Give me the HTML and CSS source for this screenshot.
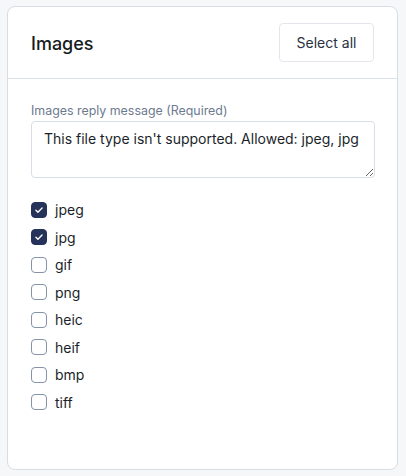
FILE: index.html
```html
<!DOCTYPE html>
<html>
<head>
<meta charset="utf-8">
<link rel="stylesheet" href="styles.css">
</head>
<body>
<div class="card">
  <div class="card-header">
    <h2 class="title">Images</h2>
    <button class="btn">Select all</button>
  </div>
  <div class="card-body">
    <label class="field-label">Images reply message (Required)</label>
    <textarea class="textarea">This file type isn't supported. Allowed: jpeg, jpg</textarea>
    <ul class="checks">
      <li class="check"><span class="box checked"><svg viewBox="0 0 16 16" width="16" height="16"><path d="M4.5 8.2l2.3 2.3 4.7-4.8" fill="none" stroke="#fff" stroke-width="1.6" stroke-linecap="round" stroke-linejoin="round"/></svg></span><span class="check-label">jpeg</span></li>
      <li class="check"><span class="box checked"><svg viewBox="0 0 16 16" width="16" height="16"><path d="M4.5 8.2l2.3 2.3 4.7-4.8" fill="none" stroke="#fff" stroke-width="1.6" stroke-linecap="round" stroke-linejoin="round"/></svg></span><span class="check-label">jpg</span></li>
      <li class="check"><span class="box"></span><span class="check-label">gif</span></li>
      <li class="check"><span class="box"></span><span class="check-label">png</span></li>
      <li class="check"><span class="box"></span><span class="check-label">heic</span></li>
      <li class="check"><span class="box"></span><span class="check-label">heif</span></li>
      <li class="check"><span class="box"></span><span class="check-label">bmp</span></li>
      <li class="check"><span class="box"></span><span class="check-label">tiff</span></li>
    </ul>
  </div>
</div>
</body>
</html>
```
FILE: styles.css
```css
* { box-sizing: border-box; }
html, body { margin: 0; padding: 0; }
body {
  background: #f6f7f9;
  font-family: Inter, "Noto Sans", sans-serif;
  color: #1b1f2a;
  padding: 6px 8px 6px 7px;
}
.card {
  background: #fff;
  border: 1px solid #d7dde5;
  border-radius: 8px;
  height: 464px;
  display: flex;
  flex-direction: column;
}
.card-header {
  display: flex;
  align-items: center;
  justify-content: space-between;
  padding: 0 23px 0 23px;
  height: 72px;
  border-bottom: 1px solid #dde2e9;
}
.title {
  margin: 0;
  font-size: 18px;
  font-weight: 500;
  color: #161a22;
  padding-top: 2px;
}
.btn {
  font-family: inherit;
  font-size: 14px;
  color: #2a3142;
  background: #fff;
  border: 1px solid #e3e7ed;
  border-radius: 4px;
  width: 95px;
  height: 39px;
  padding: 0;
}
.card-body {
  padding: 24px 23px 0 23px;
}
.field-label {
  display: block;
  font-size: 12.4px;
  color: #6c7a8f;
  line-height: 16px;
}
.textarea {
  display: block;
  margin-top: 2px;
  width: 344px;
  height: 57px;
  border: 1px solid #d9dee6;
  border-radius: 4px;
  font-family: inherit;
  font-size: 14px;
  line-height: 20px;
  color: #1b1f2a;
  padding: 7px 12px;
  resize: vertical;
}
.checks {
  list-style: none;
  margin: 18px 0 0 0;
  padding: 0;
}
.check {
  display: flex;
  align-items: center;
  height: 27.5px;
  gap: 8px;
}
.box {
  width: 16px;
  height: 16px;
  border: 1.5px solid #8493a8;
  border-radius: 4px;
  display: flex;
  align-items: center;
  justify-content: center;
  flex: none;
}
.box.checked {
  background: #25325a;
  border-color: #25325a;
}
.box svg { display: block; }
.check-label {
  font-size: 14px;
  color: #1b1f2a;
}
```
